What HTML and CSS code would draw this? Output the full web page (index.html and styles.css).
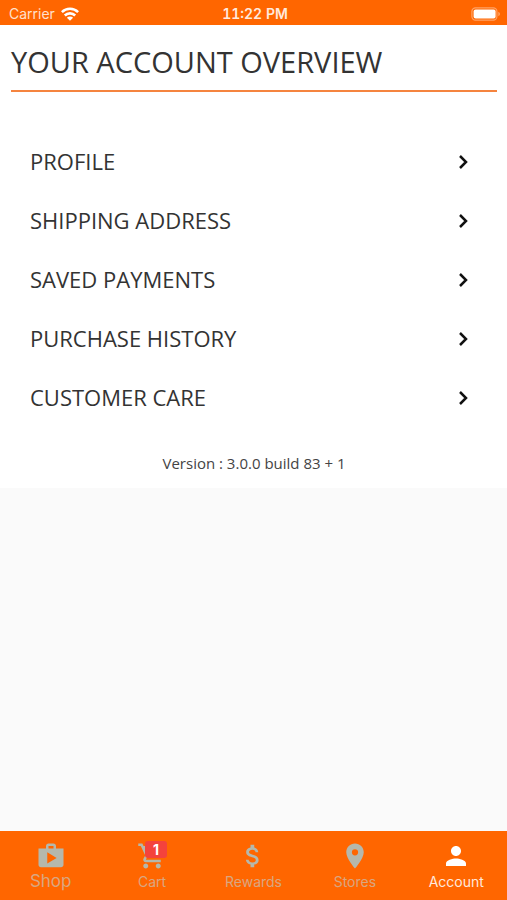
FILE: index.html
```
<!DOCTYPE html>
<html lang="en">
<head>
<meta charset="utf-8">
<meta name="viewport" content="width=device-width, initial-scale=1">
<title>Your Account Overview</title>
<link rel="stylesheet" href="styles.css">
</head>
<body>
<header class="status">
  <span class="status-side">Carrier
    <svg class="wifi" viewBox="0 0 18 14" aria-hidden="true"><g fill="none" stroke="currentColor" stroke-width="2.6"><path d="M.9 5.1a11.6 11.6 0 0 1 16.2 0"/><path d="M3.8 8.5a7.4 7.4 0 0 1 10.4 0"/></g><path fill="currentColor" d="M5.9 10.7a4.4 4.4 0 0 1 6.2 0L9 13.8z"/></svg>
  </span>
  <span class="status-time">11:22 PM</span>
  <span class="status-side status-end">
    <svg class="battery" viewBox="0 0 30 14" aria-hidden="true"><rect x=".9" y=".8" width="25" height="12.4" rx="3.6" fill="none" stroke="currentColor" stroke-width="1.2" opacity=".4"/><rect x="2.6" y="2.4" width="22" height="9.2" rx="2" fill="currentColor"/><path d="M27.4 4.8c2 .8 2 3.6 0 4.4z" fill="currentColor" opacity=".45"/></svg>
  </span>
</header>
<main class="content">
  <section class="panel">
    <h1 class="title">YOUR ACCOUNT OVERVIEW</h1>
    <nav class="menu" aria-label="Account">
      <a class="row" href="#profile">PROFILE<svg class="chevron" viewBox="0 0 10 16" aria-hidden="true"><path d="M2 2l6 6-6 6"/></svg></a>
      <a class="row" href="#shipping">SHIPPING ADDRESS<svg class="chevron" viewBox="0 0 10 16" aria-hidden="true"><path d="M2 2l6 6-6 6"/></svg></a>
      <a class="row" href="#payments">SAVED PAYMENTS<svg class="chevron" viewBox="0 0 10 16" aria-hidden="true"><path d="M2 2l6 6-6 6"/></svg></a>
      <a class="row" href="#history">PURCHASE HISTORY<svg class="chevron" viewBox="0 0 10 16" aria-hidden="true"><path d="M2 2l6 6-6 6"/></svg></a>
      <a class="row" href="#care">CUSTOMER CARE<svg class="chevron" viewBox="0 0 10 16" aria-hidden="true"><path d="M2 2l6 6-6 6"/></svg></a>
    </nav>
    <p class="version">Version : 3.0.0 build 83 + 1</p>
  </section>
</main>
<nav class="tabs" aria-label="Main">
  <a class="tab tab-large" href="#shop">
    <svg class="icon" viewBox="0 0 24 24" aria-hidden="true"><path d="M16 6V4c0-1.110-.89-2-2-2h-4c-1.110 0-2 .89-2 2v2H2v13c0 1.110.89 2 2 2h16c1.110 0 2-.89 2-2V6h-6zm-6-2h4v2h-4V4zM9 18V9l7.500 4.500L9 18z"/></svg>
    <span>Shop</span>
  </a>
  <a class="tab" href="#cart">
    <span class="icon-box">
      <svg class="icon" viewBox="0 0 24 24" aria-hidden="true"><path d="M7 18c-1.100 0-1.990.9-1.990 2S5.900 22 7 22s2-.9 2-2-.9-2-2-2zM1 2v2h2l3.600 7.590-1.350 2.450c-.16.28-.25.61-.25.96 0 1.100.9 2 2 2h12v-2H7.420c-.14 0-.25-.11-.25-.25l.03-.12.9-1.630h7.450c.75 0 1.410-.41 1.750-1.030l3.580-6.490c.08-.14.12-.31.12-.48 0-.55-.45-1-1-1H5.210l-.94-2H1zm16 16c-1.100 0-1.990.9-1.990 2s.89 2 1.990 2 2-.9 2-2-.9-2-2-2z"/></svg>
      <span class="badge">1</span>
    </span>
    <span>Cart</span>
  </a>
  <a class="tab" href="#rewards">
    <svg class="icon" viewBox="0 0 24 24" aria-hidden="true"><path d="M11.800 10.900c-2.270-.59-3-1.200-3-2.150 0-1.090 1.010-1.850 2.700-1.850 1.780 0 2.440.85 2.500 2.100h2.210c-.07-1.720-1.120-3.300-3.210-3.810V3h-3v2.160c-1.940.42-3.500 1.680-3.500 3.610 0 2.310 1.910 3.460 4.700 4.130 2.500.6 3 1.480 3 2.410 0 .69-.49 1.790-2.700 1.790-2.060 0-2.870-.92-2.980-2.100h-2.200c.12 2.190 1.760 3.420 3.680 3.830V21h3v-2.150c1.950-.37 3.500-1.500 3.500-3.550 0-2.840-2.430-3.810-4.700-4.400z"/></svg>
    <span>Rewards</span>
  </a>
  <a class="tab" href="#stores">
    <svg class="icon" viewBox="0 0 24 24" aria-hidden="true"><path d="M12 2C8.130 2 5 5.130 5 9c0 5.250 7 13 7 13s7-7.750 7-13c0-3.870-3.130-7-7-7zm0 9.500a2.500 2.500 0 0 1 0-5 2.500 2.500 0 0 1 0 5z"/></svg>
    <span>Stores</span>
  </a>
  <a class="tab tab-active" href="#account" aria-current="page">
    <svg class="icon" viewBox="0 0 24 24" aria-hidden="true"><path d="M12 12c2.210 0 4-1.790 4-4s-1.790-4-4-4-4 1.790-4 4 1.790 4 4 4zm0 2c-2.670 0-8 1.340-8 4v2h16v-2c0-2.660-5.330-4-8-4z"/></svg>
    <span>Account</span>
  </a>
</nav>
</body>
</html>
```
FILE: styles.css
```
* {
  box-sizing: border-box;
}

body {
  margin: 0;
  min-height: 100vh;
  display: flex;
  flex-direction: column;
  background: #fafafa;
  color: #333;
  font-family: "Open Sans", sans-serif;
}

a {
  color: inherit;
  text-decoration: none;
}

.status {
  display: flex;
  align-items: center;
  padding: 2px 6px 0 9px;
  height: 25px;
  background: #ff6600;
  color: #fff;
  font: 14px/20px Inter, sans-serif;
}

.status-side {
  flex: 1;
  display: flex;
  align-items: center;
  gap: 6px;
  color: #ffe0cc;
}

.status-end {
  justify-content: flex-end;
}

.status-time {
  font-weight: 600;
  font-variant-numeric: tabular-nums;
  color: #ffe9dc;
}

.wifi {
  width: 18px;
  height: 14px;
  color: #fff;
}

.battery {
  width: 30px;
  height: 14px;
  color: #fff;
}

.content {
  flex: 1;
}

.panel {
  padding: 16px 10px 15px 11px;
  background: #fff;
}

.title {
  margin: 0;
  padding-bottom: 7px;
  border-bottom: 2px solid #f5843f;
  font-size: 29px;
  line-height: 42px;
  font-weight: 400;
}

.menu {
  padding: 40px 29px 0 19px;
}

.row {
  display: flex;
  align-items: center;
  justify-content: space-between;
  height: 59px;
  font-size: 22px;
  line-height: 29px;
}

.chevron {
  width: 10px;
  height: 16px;
  fill: none;
  stroke: #111;
  stroke-width: 2.5;
}

.version {
  margin: 0;
  padding-top: 26px;
  text-align: center;
  font-size: 15px;
  line-height: 20px;
  color: #444;
}

.tabs {
  display: grid;
  grid-template-columns: repeat(5, 1fr);
  height: 69px;
  padding-top: 10px;
  background: #ff6600;
  color: #d9a680;
  font: 14px/21px Inter, sans-serif;
}

.tab {
  display: flex;
  flex-direction: column;
  align-items: center;
}

.tab-large {
  font-size: 17px;
  line-height: 20px;
}

.tab-active {
  color: #ffe9dc;
}

.icon {
  display: block;
  width: 30px;
  height: 30px;
  fill: #b5b8ac;
}

.tab-active .icon {
  fill: #fff;
}

.icon-box {
  position: relative;
}

.badge {
  position: absolute;
  top: 0;
  left: 8px;
  width: 22px;
  border-radius: 3px;
  background: #f4433c;
  color: #fff;
  text-align: center;
  font-size: 14px;
  line-height: 17px;
  font-weight: 700;
}
```
